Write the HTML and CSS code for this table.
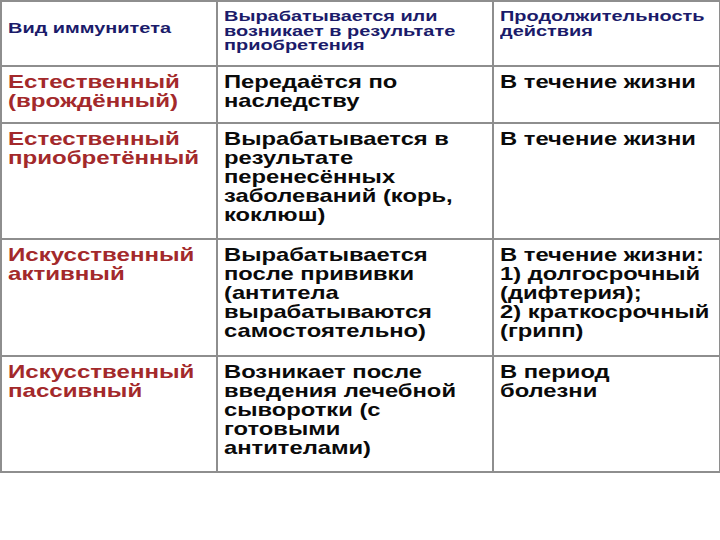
FILE: index.html
```html
<!DOCTYPE html>
<html lang="ru">
<head>
<meta charset="utf-8">
<title>Виды иммунитета</title>
<link rel="stylesheet" href="styles.css">
</head>
<body>
<table class="grid">
  <colgroup>
    <col class="c1">
    <col class="c2">
    <col class="c3">
  </colgroup>
  <tr class="r0">
    <th class="h1"><div class="t hd">Вид иммунитета</div></th>
    <th><div class="t hd">Вырабатывается или<br>возникает в результате<br>приобретения</div></th>
    <th><div class="t hd">Продолжительность<br>действия</div></th>
  </tr>
  <tr class="r1">
    <td><div class="t red">Естественный<br>(врождённый)</div></td>
    <td><div class="t blk">Передаётся по<br>наследству</div></td>
    <td><div class="t blk">В течение жизни</div></td>
  </tr>
  <tr class="r2">
    <td><div class="t red">Естественный<br>приобретённый</div></td>
    <td><div class="t blk">Вырабатывается в<br>результате<br>перенесённых<br>заболеваний (корь,<br>коклюш)</div></td>
    <td><div class="t blk">В течение жизни</div></td>
  </tr>
  <tr class="r3">
    <td><div class="t red">Искусственный<br>активный</div></td>
    <td><div class="t blk">Вырабатывается<br>после прививки<br>(антитела<br>вырабатываются<br>самостоятельно)</div></td>
    <td><div class="t blk">В течение жизни:<br>1) долгосрочный<br>(дифтерия);<br>2) краткосрочный<br>(грипп)</div></td>
  </tr>
  <tr class="r4">
    <td><div class="t red">Искусственный<br>пассивный</div></td>
    <td><div class="t blk">Возникает после<br>введения лечебной<br>сыворотки (с<br>готовыми<br>антителами)</div></td>
    <td><div class="t blk">В период<br>болезни</div></td>
  </tr>
</table>
</body>
</html>
```
FILE: styles.css
```css
html, body {
  margin: 0;
  padding: 0;
  background: #ffffff;
}

body {
  font-family: "Liberation Sans", Arial, sans-serif;
  font-weight: bold;
}

.grid {
  border-collapse: collapse;
  table-layout: fixed;
  width: 719px;
}

.c1 { width: 216px; }
.c2 { width: 276px; }
.c3 { width: 227px; }

.grid th,
.grid td {
  border: 2px solid #8e8e8e;
  vertical-align: top;
  text-align: left;
  padding: 5px 0 0 6px;
  overflow: hidden;
}

.grid th {
  padding-top: 7px;
}

.grid th.h1 {
  padding-top: 19px;
}

.r0 { height: 65px; }
.r1 { height: 57px; }
.r2 { height: 116px; }
.r3 { height: 117px; }
.r4 { height: 116px; }

.t {
  white-space: nowrap;
  transform-origin: 0 0;
}

.hd {
  color: #1b1b6a;
  font-size: 15.5px;
  line-height: 14.5px;
  transform: scaleX(1.285);
}

.red {
  color: #a3292b;
  font-size: 19px;
  line-height: 19px;
  transform: scaleX(1.267);
}

.blk {
  color: #0a0a0a;
  font-size: 19px;
  line-height: 19px;
  transform: scaleX(1.25);
}
```
